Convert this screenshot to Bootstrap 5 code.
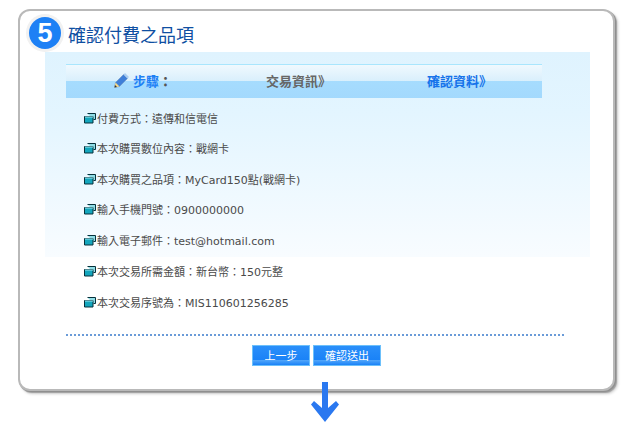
<!DOCTYPE html>
<html lang="zh-Hant">
<head>
<meta charset="utf-8">
<title>確認付費之品項</title>
<link href="https://cdn.jsdelivr.net/npm/bootstrap@5.3.0/dist/css/bootstrap.min.css" rel="stylesheet">
<style>
html,body{margin:0;background:#fff;height:422px;overflow:hidden}
body{font-family:"DejaVu Sans","Noto Sans CJK TC",sans-serif;font-size:11px;color:#4a4a4a;padding:9px 0 0 18px}
.shell{width:597px;height:382px;background:#fff;border:2px solid #b9b9b9;border-radius:12px;box-shadow:1px 1px 0 #8f8f8f,2px 2px 1px #a0a0a0,3px 3px 3px #d0d0d0;position:relative}
.head{height:41px;padding:0 0 0 9px}
.num-disc{width:32px;height:32px;border-radius:50%;background:#1d80f5;box-shadow:0 0 0 3px #f1f1f1;color:#fff;font:700 27px/32px "Liberation Sans",sans-serif;text-align:center;flex:none;margin-top:6px}
.ttl{font-family:"Noto Sans CJK TC",sans-serif;font-size:18px;line-height:24px;color:#0f4fa2;margin:0 0 0 7px;font-weight:400;padding-top:11px}
.pane{width:545px;margin-left:25px;height:205px;padding:12px 0 0 21px;background:linear-gradient(#dff3fe,#e3f5ff 30%,#f8fcff)}
.stepbar{width:476px;height:34px;border-top:1px solid #a9e6fd;background:linear-gradient(#f0f9fe,#d9effc 48%,#a6dcfe 49%,#a3d9fd);font-size:13px;font-weight:700;line-height:33px;position:relative}
.st{position:absolute;top:0;white-space:nowrap}
.st-a{left:48px;color:#1d80f5}
.st-a b{color:#555}
.st-b{left:200px;color:#666}
.st-c{left:361px;color:#1673ea}
.pencil{vertical-align:-2px;margin-right:4px}
.rows{padding:6.500px 0 0 18px}
.rowx{height:30.500px;line-height:30px;white-space:nowrap}
.cube{vertical-align:-1px;margin-right:1px}
.rows2{padding:0 0 0 64px;margin-top:1px}
.rule{width:498px;margin:15px 0 0 46px;border-top:2px dotted #6a9bd8;height:0}
.acts{margin:9px 0 0 232px;gap:3px}
.bt{border:1px solid #6cc0fb;border-radius:0;height:21px;padding:0;background:linear-gradient(#2a8ffa,#1a82f7 75%,#4ea4fa 76%,#1a82f7);color:#fff;font-size:11px;line-height:19px;font-family:"Noto Sans CJK TC",sans-serif}
.b1{width:58px}
.b2{width:68px}
.arrow{position:absolute;left:290px;top:371px}
</style>
</head>
<body>
<div class="shell">
  <div class="head d-flex align-items-start">
    <div class="num-disc">5</div>
    <h1 class="ttl">確認付費之品項</h1>
  </div>
  <div class="pane">
    <div class="stepbar">
      <span class="st st-a"><svg class="pencil" width="15" height="15" viewBox="0 0 15 15"><path d="M0.500 14.500l1-5L9.500 1.500l4 4-8 8z" fill="#3f7fd8" stroke="#6f8fb8" stroke-width=".5"/><path d="M9.500 1.500l1.500-1.500 4 4-1.500 1.500z" fill="#a9cdf2"/><path d="M.5 14.500l1-5 4 4z" fill="#f3d98a"/><path d="M.5 14.500l.5-2.500 2 2z" fill="#333"/></svg>步驟<b>：</b></span>
      <span class="st st-b">交易資訊》</span>
      <span class="st st-c">確認資料》</span>
    </div>
    <div class="rows">
      <div class="rowx"><svg class="cube" width="12" height="11" viewBox="0 0 12 11"><path d="M3.500.5h8v6h-2" fill="#8fdde6" stroke="#06303a"/><path d="M.5 3.500h8.500v6.500H.5z" fill="#14a6bd" stroke="#06303a"/><path d="M1 4h8" stroke="#9fe9f2"/></svg>付費方式：遠傳和信電信</div>
      <div class="rowx"><svg class="cube" width="12" height="11" viewBox="0 0 12 11"><path d="M3.500.5h8v6h-2" fill="#8fdde6" stroke="#06303a"/><path d="M.5 3.500h8.500v6.500H.5z" fill="#14a6bd" stroke="#06303a"/><path d="M1 4h8" stroke="#9fe9f2"/></svg>本次購買數位內容：戰網卡</div>
      <div class="rowx"><svg class="cube" width="12" height="11" viewBox="0 0 12 11"><path d="M3.500.5h8v6h-2" fill="#8fdde6" stroke="#06303a"/><path d="M.5 3.500h8.500v6.500H.5z" fill="#14a6bd" stroke="#06303a"/><path d="M1 4h8" stroke="#9fe9f2"/></svg>本次購買之品項：MyCard150點(戰網卡)</div>
      <div class="rowx"><svg class="cube" width="12" height="11" viewBox="0 0 12 11"><path d="M3.500.5h8v6h-2" fill="#8fdde6" stroke="#06303a"/><path d="M.5 3.500h8.500v6.500H.5z" fill="#14a6bd" stroke="#06303a"/><path d="M1 4h8" stroke="#9fe9f2"/></svg>輸入手機門號：0900000000</div>
      <div class="rowx"><svg class="cube" width="12" height="11" viewBox="0 0 12 11"><path d="M3.500.5h8v6h-2" fill="#8fdde6" stroke="#06303a"/><path d="M.5 3.500h8.500v6.500H.5z" fill="#14a6bd" stroke="#06303a"/><path d="M1 4h8" stroke="#9fe9f2"/></svg>輸入電子郵件：test@hotmail.com</div>
    </div>
  </div>
  <div class="rows2">
    <div class="rowx"><svg class="cube" width="12" height="11" viewBox="0 0 12 11"><path d="M3.500.5h8v6h-2" fill="#8fdde6" stroke="#06303a"/><path d="M.5 3.500h8.500v6.500H.5z" fill="#14a6bd" stroke="#06303a"/><path d="M1 4h8" stroke="#9fe9f2"/></svg>本次交易所需金額：新台幣：150元整</div>
    <div class="rowx"><svg class="cube" width="12" height="11" viewBox="0 0 12 11"><path d="M3.500.5h8v6h-2" fill="#8fdde6" stroke="#06303a"/><path d="M.5 3.500h8.500v6.500H.5z" fill="#14a6bd" stroke="#06303a"/><path d="M1 4h8" stroke="#9fe9f2"/></svg>本次交易序號為：MIS110601256285</div>
  </div>
  <div class="rule"></div>
  <div class="acts d-flex">
    <button type="button" class="btn bt b1">上一步</button>
    <button type="button" class="btn bt b2">確認送出</button>
  </div>
  <svg class="arrow" width="30" height="40" viewBox="0 0 30 40"><path d="M12 0h6v26l8-7 3 3.500L15 40 1 22.500 4 19l8 7z" fill="#2a78f0"/></svg>
</div>
<script src="https://cdn.jsdelivr.net/npm/bootstrap@5.3.0/dist/js/bootstrap.bundle.min.js"></script>
</body>
</html>
